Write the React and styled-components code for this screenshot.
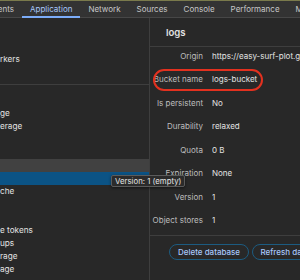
import React from 'react';
import styled, { createGlobalStyle } from 'styled-components';

const GlobalStyle = createGlobalStyle`
  html, body {
    margin: 0;
    padding: 0;
    background: #282828;
  }
  body {
    font-family: Inter, "Liberation Sans", sans-serif;
    color: #e3e3e3;
  }
`;

const Window = styled.div`
  width: 300px;
  height: 280px;
  overflow: hidden;
  display: flex;
  flex-direction: column;
  background: #282828;
  border-top: 1px solid #7a7a4c;
  box-sizing: border-box;
`;

const TabBar = styled.div`
  display: flex;
  height: 17px;
  flex-shrink: 0;
  background: #333333;
  border-bottom: 1px solid #474747;
  box-sizing: border-box;
`;

const Tab = styled.div`
  position: relative;
  display: flex;
  align-items: center;
  padding: 0 8px;
  font-size: 8px;
  white-space: nowrap;
  color: ${({ active }) => (active ? '#a8c7fa' : '#c7c7c7')};
  flex-shrink: 0;

  ${({ active }) =>
    active &&
    `
    &::after {
      content: '';
      position: absolute;
      left: 0;
      right: 0;
      bottom: -1px;
      height: 2px;
      background: #7cacf8;
    }
  `}
`;

// tab strip is scrolled: first tab only shows its tail
const ClippedTab = styled(Tab)`
  width: 22px;
  padding: 0 8px 0 0;
  box-sizing: border-box;
  justify-content: flex-end;
  overflow: hidden;
`;

const Body = styled.div`
  flex: 1;
  display: flex;
  min-height: 0;
`;

const Sidebar = styled.div`
  position: relative;
  width: 149px;
  flex-shrink: 0;
  border-right: 1px solid #3e3e3e;
  padding-top: 8.5px;
`;

const TreeRow = styled.div`
  height: 13px;
  display: flex;
  align-items: center;
  font-size: 8.2px;
  white-space: nowrap;
  color: #e3e3e3;
  background: ${({ variant }) =>
    variant === 'selected' ? '#0b5385' : variant === 'hover' ? '#414141' : 'transparent'};
`;

const SideDivider = styled.div`
  height: 1px;
  margin: 5px 0 9px;
  background: #3e3e3e;
`;

const Tooltip = styled.div`
  position: absolute;
  left: 111px;
  top: 157px;
  height: 12px;
  padding: 0 3px;
  display: flex;
  align-items: center;
  font-size: 7.8px;
  white-space: nowrap;
  color: #e3e3e3;
  background: #2b2b2b;
  border: 1px solid #5b5b5b;
  border-radius: 2px;
  box-sizing: border-box;
  box-shadow: 0 1px 3px rgba(0, 0, 0, 0.5);
  z-index: 2;
`;

const Main = styled.div`
  flex: 1;
  min-width: 0;
  display: flex;
  flex-direction: column;
`;

const Header = styled.div`
  height: 28px;
  flex-shrink: 0;
  display: flex;
  align-items: center;
  padding-left: 16px;
  font-size: 9.6px;
  font-weight: 600;
  color: #e3e3e3;
  border-bottom: 1px solid #3e3e3e;
`;

const Props = styled.div`
  display: flex;
  flex-direction: column;
  gap: 11.57px;
  padding: 2.5px 0 8.5px 2px;
  border-bottom: 1px solid #3e3e3e;
`;

const PropRow = styled.div`
  position: relative;
  display: grid;
  grid-template-columns: 51px 1fr;
  column-gap: 9px;
  height: 12px;
  align-items: center;
  font-size: 8px;
  white-space: nowrap;

  ${({ marked }) =>
    marked &&
    `
    &::after {
      content: '';
      position: absolute;
      left: 1px;
      top: -4px;
      width: 110px;
      height: 22px;
      border: 2px solid #e3311f;
      border-radius: 11px;
      box-sizing: border-box;
    }
  `}
`;

const Key = styled.span`
  text-align: right;
  color: #bdbdbd;
`;

const Value = styled.span`
  color: #e3e3e3;
  overflow: hidden;
`;

const Actions = styled.div`
  display: flex;
  gap: 2.5px;
  padding: 8.5px 0 0 19px;
`;

const Button = styled.div`
  height: 16px;
  display: flex;
  align-items: center;
  padding: 0 8px;
  border: 1px solid #1c5b80;
  border-radius: 9px;
  font-size: 8px;
  font-weight: 500;
  white-space: nowrap;
  color: #a8c7fa;
  box-sizing: border-box;
  flex-shrink: 0;
`;

const tabs = ['Application', 'Network', 'Sources', 'Console', 'Performance', 'Memory'];

const topRows = ['', '', 'rkers', ''];
const storageRows = [
  { label: '' },
  { label: 'ge' },
  { label: 'erage' },
  { label: '' },
  { label: '' },
  { label: '', variant: 'hover' },
  { label: '', variant: 'selected' },
  { label: 'che' },
  { label: '' },
  { label: '' },
  { label: 'e tokens' },
  { label: 'ups' },
  { label: 'rage' },
  { label: 'age' },
];

const props = [
  ['Origin', 'https://easy-surf-plot.glitch.me'],
  ['Bucket name', 'logs-bucket', true],
  ['Is persistent', 'No'],
  ['Durability', 'relaxed'],
  ['Quota', '0 B'],
  ['Expiration', 'None'],
  ['Version', '1'],
  ['Object stores', '1'],
];

export default function App() {
  return (
    <>
      <GlobalStyle />
      <Window>
        <TabBar>
          <ClippedTab>Elements</ClippedTab>
          {tabs.map(t => (
            <Tab key={t} active={t === 'Application'}>
              {t}
            </Tab>
          ))}
        </TabBar>
        <Body>
          <Sidebar>
            {topRows.map((r, i) => (
              <TreeRow key={'t' + i}>{r}</TreeRow>
            ))}
            <SideDivider />
            {storageRows.map((r, i) => (
              <TreeRow key={'s' + i} variant={r.variant}>
                {r.label}
              </TreeRow>
            ))}
            <Tooltip>Version: 1 (empty)</Tooltip>
          </Sidebar>
          <Main>
            <Header>logs</Header>
            <Props>
              {props.map(([k, v, marked]) => (
                <PropRow key={k} marked={marked}>
                  <Key>{k}</Key>
                  <Value>{v}</Value>
                </PropRow>
              ))}
            </Props>
            <Actions>
              <Button>Delete database</Button>
              <Button>Refresh database</Button>
            </Actions>
          </Main>
        </Body>
      </Window>
    </>
  );
}
